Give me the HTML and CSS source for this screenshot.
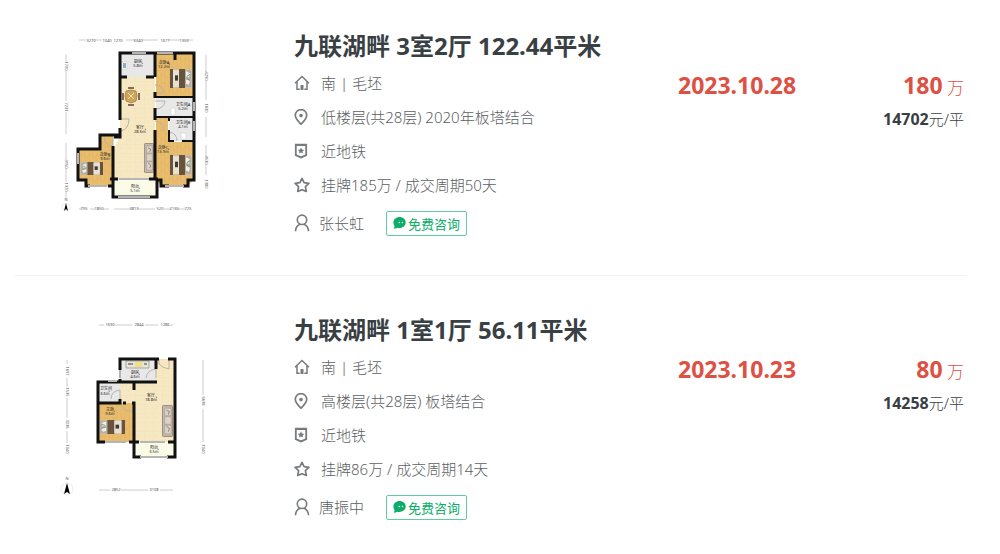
FILE: index.html
```html
<!DOCTYPE html>
<html lang="zh-CN">
<head>
  <meta charset="UTF-8">
  <title>九联湖畔 成交房源</title>
  <link rel="stylesheet" href="styles.css">
</head>
<body>
  <svg class="defs" aria-hidden="true">
    <symbol id="icon-house" viewBox="0 0 16 16">
      <path d="M1 8.2 8 1.5l7 6.7M3 7v7.3h2.700M13 7v7.3h-2.700" fill="none" stroke="currentColor" stroke-width="1.5"/>
      <path d="M6.500 10h3v5h-3z" fill="currentColor"/>
    </symbol>
    <symbol id="icon-pin" viewBox="0 0 16 16">
      <path d="M7 15.200C4.500 12.600 1.300 10 1.300 6.300a5.700 5.700 0 0 1 11.400 0C12.700 10 9.500 12.600 7 15.200z" fill="none" stroke="currentColor" stroke-width="1.700"/>
      <circle cx="7" cy="6.600" r="1.800" fill="currentColor"/>
    </symbol>
    <symbol id="icon-tag" viewBox="0 0 16 16">
      <path d="M1.800 1.600h10.400v10.600L7 14.400l-5.200-2.200z" fill="none" stroke="currentColor" stroke-width="1.800"/>
      <path d="M1 1h12v2H1z" fill="currentColor"/>
      <path d="m7 4.600 1 2 2.200.3-1.600 1.500.4 2.200-2-1-2 1 .4-2.200-1.600-1.500L6 6.600z" fill="currentColor"/>
    </symbol>
    <symbol id="icon-star" viewBox="0 0 16 16">
      <path d="m8 1.400 2.100 4.200 4.800.8-3.500 3.300.9 4.700L8 12.800l-4.300 1.600.9-4.700L1.100 6.400l4.800-.8z" fill="none" stroke="currentColor" stroke-width="1.700" stroke-linejoin="round"/>
    </symbol>
    <symbol id="icon-user" viewBox="0 0 16 18">
      <circle cx="8" cy="5.800" r="4.700" fill="none" stroke="currentColor" stroke-width="1.600"/>
      <path d="M1.500 17.300c.2-3.800 2-6 4.500-7M14.500 17.300c-.2-3.800-2-6-4.500-7" fill="none" stroke="currentColor" stroke-width="1.600"/>
    </symbol>
    <symbol id="icon-chat" viewBox="0 0 13 12">
      <path d="M6.600 0C10 0 12.700 2.300 12.700 5.400s-2.700 5.500-6.100 5.500c-.8 0-1.500 0-2.200-.2L1 12l.5-3C.8 8 .4 6.800.4 5.400.4 2.300 3.200 0 6.600 0z" fill="#0bad68"/>
      <circle cx="6.300" cy="5.500" r=".8" fill="#fff"/>
      <circle cx="9.400" cy="5.500" r=".8" fill="#fff"/>
    </symbol>
    <symbol id="bed" viewBox="0 0 22 18" preserveAspectRatio="none">
      <path d="M0 0h22v18H0z" fill="#c9bfae"/>
      <path d="M0 0h3v18H0zM9 0h6v18H9z" fill="#68533f"/>
      <path d="M3 1h6v16H3z" fill="#e9e0d0"/>
      <path d="M5 6h3v5H5z" fill="#3b3b38"/>
      <path d="M15 1h6v16h-6z" fill="#b8ad9b"/>
      <path d="m16 2 4 2-1 4-3-1zM16 10l4 1-1 4-3-1z" fill="#f4efe6"/>
      <path d="m17 7 3-2M17 9l3 2" stroke="#68a5a5"/>
    </symbol>
    <symbol id="sofa" viewBox="0 0 12 30" preserveAspectRatio="none">
      <rect x=".5" y=".5" width="11" height="29" rx="1" fill="#c4b8ae" stroke="#857a70" stroke-width=".8"/>
      <path d="M3 3h7v7H3zM3 11h7v7H3zM3 19h7v8H3z" fill="#ddd2c8" stroke="#9c9087" stroke-width=".5"/>
      <path d="m5 5 3 1-1 3M5 20l3 2-1 3" fill="none" stroke="#7b726b" stroke-width=".8"/>
    </symbol>
    <pattern id="wood" width="8" height="8" patternUnits="userSpaceOnUse">
      <path d="M0 0h8v8H0z" fill="#e8bd6d"/>
      <path d="M1 0v8M5 0v8M1 3h4M5 6h3" stroke="#deb060" stroke-width=".5"/>
    </pattern>
    <pattern id="tile" width="9" height="9" patternUnits="userSpaceOnUse">
      <path d="M0 0h9v9H0z" fill="#f5e8c3"/>
      <path d="M0 0h9M0 0v9M2 6l3-3" stroke="#f1ddad" stroke-width=".6"/>
    </pattern>
  </svg>

  <main class="list">
    <article class="item">
      <a class="plan" href="#" aria-label="九联湖畔 3室2厅 户型图">
        <svg viewBox="60 35 150 180">
          <path d="M120 53h35v127h-41v-32l6-12z" fill="url(#tile)"/>
          <path d="M121 54h33v23h-33zM156 98h37v43h-24v-23h-13z" fill="#e8e8e8"/>
          <path d="M156 54h37v43h-37zM156 118h12v24h25v38l-5 6h-27l-5-6zM79 149h20v-14h14v45l-1 6H87v-6h-8z" fill="url(#wood)"/>
          <path d="M114 179h41v18h-41z" fill="#fbfce7"/>
          <use href="#bed" x="170" y="69" width="22" height="19"/>
          <use href="#bed" x="170" y="155" width="22" height="20"/>
          <use href="#bed" x="-103" y="162" width="23" height="13" transform="scale(-1 1)"/>
          <use href="#sofa" x="144" y="143" width="10" height="30"/>
          <g class="thin">
            <path d="M155 85q9 0 9 8h-9M155 101h10q-1 8-10 8M155 121q9 1 9 10M121 119h8q0 10-8 12M104 137q1 9 9 9v-9M169 132q8 1 8 9" />
          </g>
          <g fill="#fff" stroke="#ccc" stroke-width=".6">
            <path d="M122 62h5v7h-5zM171 108h4v7h-4zM181 133h5v6h-5z"/>
          </g>
          <path d="M123 63h3v5h-3z" fill="#8bafc2"/>
          <g>
            <path d="m126 91 5-1 5 1 1 5-1 5-5 2-5-2-1-5z" fill="#d0a35b" stroke="#a67e45" stroke-width=".8"/>
            <path d="m128 93 6 6m0-6-6 6" stroke="#f5dfaa"/>
            <path d="M128 88h6M123 93v7M139 93v7M128 105h6" stroke="#564638" stroke-width="1.500"/>
          </g>
          <g class="wall">
            <path d="M120 120V53h74v127h-6v6h-5M169 186h-8v-6h-5M114 137h6v-9M120 135h-20v14H78v31h8v6h4M108 186h5v-6M155 53v24M175 53v7M155 92v6M155 108v12M155 130v50M121 77h6M146 77h8M113 146v51h44v-18M110 179h8M149 179h9"/>
            <path class="inner" d="M155 97h38M155 117h38M169 117v4M169 130v11h5M182 141h11"/>
          </g>
          <path class="window" d="M132 53h14M157 53h16M165 186h19M88 186h19M119 179h30M118 197h32M194 102v9M194 121v10M78 153v11"/>
          <g class="plan-text">
            <text x="138" y="63">厨房</text><text x="138" y="67">5.8㎡</text>
            <text x="164" y="64">次卧A</text><text x="164" y="68">12.2㎡</text>
            <text x="183" y="106">卫生间A</text><text x="183" y="110">5.2㎡</text>
            <text x="183" y="124">卫生间B</text><text x="183" y="128">4.1㎡</text>
            <text x="140" y="129">客厅</text><text x="140" y="133">28.6㎡</text>
            <text x="163" y="149">次卧C</text><text x="163" y="153">13.9㎡</text>
            <text x="105" y="156">次卧B</text><text x="105" y="160">9.6㎡</text>
            <text x="135" y="188">阳台</text><text x="135" y="192">5.1㎡</text>
          </g>
          <g class="measure">
            <path d="M79 40h7M95 40h7M126 40h9M142 40h16M169 40h11M187 40h6M66 54v8M66 70v31M66 112v22M66 143v17M66 168v14M66 191v7M206 55v17M206 80v20M206 117v20M206 145v12M206 164v11M79 209h3M90 209h5M103 209h6M114 209h16M138 209h17M164 209h7M177 209h8"/>
          </g>
          <g class="plan-text measure-text">
            <text x="91" y="42">3270</text><text x="107" y="42">1040</text><text x="118" y="42">1270</text><text x="138" y="42">3340</text><text x="165" y="42">1677</text><text x="184" y="42">1350</text>
            <text x="84" y="210">795</text><text x="99" y="210">1850</text><text x="134" y="210">3813</text><text x="160" y="210">520</text><text x="174" y="210">2130</text><text x="188" y="210">725</text>
            <text transform="translate(65 66) rotate(90)">1700</text><text transform="translate(65 107) rotate(90)">7231</text><text transform="translate(65 164) rotate(90)">3150</text><text transform="translate(65 187) rotate(90)">1370</text>
            <text transform="translate(205 76) rotate(90)">4290</text><text transform="translate(205 108) rotate(90)">1830</text><text transform="translate(205 160) rotate(90)">3530</text><text transform="translate(205 184) rotate(90)">1380</text>
            <text x="66" y="201">N</text>
          </g>
          <circle cx="66" cy="207" r="4" fill="#fff" stroke="#ddd" stroke-width=".5"/>
          <path d="m66 203 2 8-2-2-2 2z"/>
        </svg>
      </a>
      <div class="info">
        <h2>九联湖畔 3室2厅 122.44平米</h2>
        <p class="row"><svg class="icon"><use href="#icon-house"/></svg>南 | 毛坯</p>
        <p class="row"><svg class="icon"><use href="#icon-pin"/></svg>低楼层(共28层) 2020年板塔结合</p>
        <p class="row"><svg class="icon"><use href="#icon-tag"/></svg>近地铁</p>
        <p class="row"><svg class="icon"><use href="#icon-star"/></svg>挂牌185万 / 成交周期50天</p>
        <div class="row agent">
          <svg class="icon user"><use href="#icon-user"/></svg>张长虹
          <button class="consult" type="button"><svg class="chat"><use href="#icon-chat"/></svg>免费咨询</button>
        </div>
      </div>
      <time class="date" datetime="2023-10-28">2023.10.28</time>
      <div class="price">
        <div class="total"><strong>180</strong> 万</div>
        <div class="unit"><strong>14702</strong>元/平</div>
      </div>
    </article>

    <article class="item">
      <a class="plan" href="#" aria-label="九联湖畔 1室1厅 户型图">
        <svg viewBox="60 320 150 180">
          <path d="M120 360h55v83h-40v-39h-15z" fill="url(#tile)"/>
          <path d="M121 361h35v22h-35zM98 383h22v20H98z" fill="#e8e8e8"/>
          <path d="M98 404h36v39H98z" fill="url(#wood)"/>
          <path d="M134 444h40v14h-40z" fill="#fbfce7"/>
          <use href="#bed" x="-125" y="421" width="26" height="14" transform="scale(-1 1)"/>
          <use href="#sofa" x="162" y="406" width="11" height="32"/>
          <path d="M126 362h23v7h-23z" fill="#e8e5db" stroke="#80786f" stroke-width=".6"/>
          <path d="M135 363h7v5h-7z" fill="#efdf85"/>
          <path d="M128 365h5M144 365h3" stroke="#777" stroke-width="1.500"/>
          <g class="thin">
            <path d="M159 360v5q3 4 10 5v-10M146 379q1-8 10-9v9M111 400q0-8 9-9v9M121 404q1 8 12 9v-9"/>
          </g>
          <g class="wall">
            <path d="M159 360h-39v11M120 380v3H98v60h7M168 360h7v98h-8M120 400v4h-22M156 361v9M157 383h-37M134 384v7M123 404h3M132 404h2v54h7M129 443h10M168 443h7"/>
          </g>
          <path class="window" d="M108 382h9M120 371v8M105 443h21M140 443h25M140 458h28"/>
          <g class="plan-text">
            <text x="135" y="375">厨房</text><text x="135" y="379">4.6㎡</text>
            <text x="106" y="391">卫生间</text><text x="105" y="396">3.6㎡</text>
            <text x="151" y="398">客厅</text><text x="151" y="402">18.8㎡</text>
            <text x="110" y="412">主卧</text><text x="110" y="416">9.6㎡</text>
            <text x="154" y="450">阳台</text><text x="154" y="454">3.5㎡</text>
          </g>
          <g class="measure">
            <path d="M99 326h5M115 326h17M145 326h13M170 326h3M67 361v4M67 379v9M67 399v20M67 432v12M203 361v35M203 410v33M99 491h11M121 491h27M160 491h13"/>
          </g>
          <g class="plan-text measure-text">
            <text x="110" y="327">1690</text><text x="139" y="327">2844</text><text x="165" y="327">1286</text>
            <text x="116" y="492">2852</text><text x="154" y="492">3108</text>
            <text transform="translate(66 372) rotate(90)">1697</text><text transform="translate(66 393) rotate(90)">1535</text><text transform="translate(66 425) rotate(90)">3236</text><text transform="translate(66 450) rotate(90)">1040</text>
            <text transform="translate(202 402) rotate(90)">6638</text><text transform="translate(202 450) rotate(90)">1040</text>
            <text x="67" y="481">N</text>
          </g>
          <circle cx="67" cy="490" r="6" fill="#fff" stroke="#ddd" stroke-width=".6"/>
          <path d="m67 484 3 11-3-2-3 2z"/>
        </svg>
      </a>
      <div class="info">
        <h2>九联湖畔 1室1厅 56.11平米</h2>
        <p class="row"><svg class="icon"><use href="#icon-house"/></svg>南 | 毛坯</p>
        <p class="row"><svg class="icon"><use href="#icon-pin"/></svg>高楼层(共28层) 板塔结合</p>
        <p class="row"><svg class="icon"><use href="#icon-tag"/></svg>近地铁</p>
        <p class="row"><svg class="icon"><use href="#icon-star"/></svg>挂牌86万 / 成交周期14天</p>
        <div class="row agent">
          <svg class="icon user"><use href="#icon-user"/></svg>唐振中
          <button class="consult" type="button"><svg class="chat"><use href="#icon-chat"/></svg>免费咨询</button>
        </div>
      </div>
      <time class="date" datetime="2023-10-23">2023.10.23</time>
      <div class="price">
        <div class="total"><strong>80</strong> 万</div>
        <div class="unit"><strong>14258</strong>元/平</div>
      </div>
    </article>
  </main>
</body>
</html>
```
FILE: styles.css
```css
* {
  box-sizing: border-box;
}
body {
  margin: 0;
  background: #fff;
  color: #394043;
  font-family: "Noto Sans", "Noto Sans CJK SC", sans-serif;
}
h2, p {
  margin: 0;
}
.defs {
  display: block;
  width: 0;
  height: 0;
}
.list {
  margin: 0 34px 0 15px;
}
.item {
  display: grid;
  grid-template-columns: 279px 1fr 120px 168px;
  padding: 37px 0 31px;
}
.item:first-child {
  padding-top: 29px;
  border-bottom: 1px solid #f1f1f1;
}

/* floor plans */
.plan {
  padding: 6px 0 0 45px;
}
.plan svg {
  display: block;
  width: 150px;
  height: 180px;
}
.wall {
  fill: none;
  stroke: #111;
  stroke-width: 3;
}
.inner {
  stroke-width: 2;
}
.window {
  fill: none;
  stroke: #b5b5b5;
  stroke-width: 2;
}
.thin {
  fill: none;
  stroke: #b9b3a9;
  stroke-width: 1;
}
.measure {
  stroke: #ccc;
  stroke-width: 1;
}
.plan-text {
  font-size: 4px;
  text-anchor: middle;
  fill: #222;
}
.measure-text {
  fill: #555;
}

/* text column */
h2 {
  margin-bottom: 3px;
  font-size: 24px;
  line-height: 34px;
  font-weight: 700;
  white-space: nowrap;
}
.row {
  display: flex;
  align-items: center;
  height: 34px;
  color: #5c6163;
  font-size: 15px;
  line-height: 20px;
  font-weight: 300;
  white-space: nowrap;
}
.icon {
  width: 16px;
  height: 16px;
  margin-right: 11px;
  color: #777b7d;
}
.agent {
  height: 42px;
}
.user {
  height: 18px;
  margin-right: 9px;
}
.consult {
  display: flex;
  align-items: center;
  height: 25px;
  margin-left: 22px;
  padding: 0 6px;
  border: 1px solid #5fcd9f;
  border-radius: 2px;
  background: #fff;
  color: #0bad68;
  font-family: inherit;
  font-size: 13px;
  font-weight: 400;
  cursor: pointer;
}
.chat {
  width: 13px;
  height: 12px;
  margin-right: 2px;
}

/* deal date and price */
.date, .total {
  padding-top: 39px;
  color: #dd5043;
  font-size: 23px;
  line-height: 34px;
  font-weight: 700;
}
.price {
  padding-right: 2px;
  text-align: right;
}
.total {
  font-size: 17px;
  font-weight: 300;
}
.total strong {
  font-size: 23px;
  font-weight: 700;
}
.unit {
  font-size: 15px;
  line-height: 28px;
  font-weight: 300;
}
.unit strong {
  font-size: 16px;
  font-weight: 700;
}
```
